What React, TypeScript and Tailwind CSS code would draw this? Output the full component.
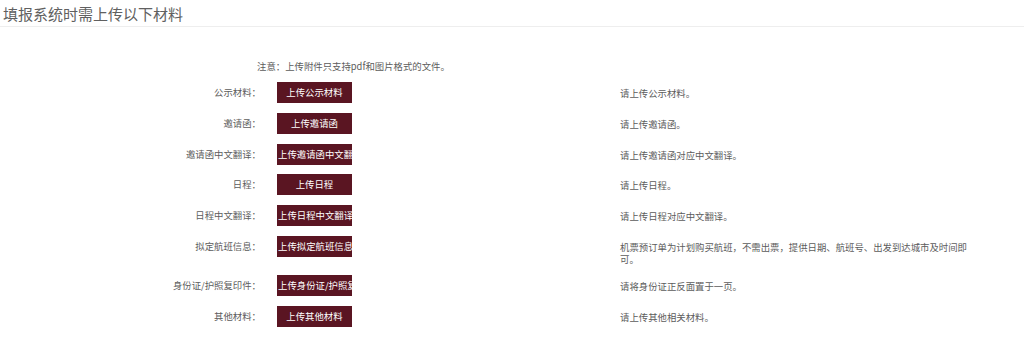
const rows = [
    { label: "公示材料：", button: "上传公示材料", desc: "请上传公示材料。" },
    { label: "邀请函：", button: "上传邀请函", desc: "请上传邀请函。" },
    { label: "邀请函中文翻译：", button: "上传邀请函中文翻译", desc: "请上传邀请函对应中文翻译。" },
    { label: "日程：", button: "上传日程", desc: "请上传日程。" },
    { label: "日程中文翻译：", button: "上传日程中文翻译", desc: "请上传日程对应中文翻译。" },
    { label: "拟定航班信息：", button: "上传拟定航班信息", desc: "机票预订单为计划购买航班，不需出票，提供日期、航班号、出发到达城市及时间即可。" },
    { label: "身份证/护照复印件：", button: "上传身份证/护照复印件", desc: "请将身份证正反面置于一页。" },
    { label: "其他材料：", button: "上传其他材料", desc: "请上传其他相关材料。" },
];

export default function App() {
    return (
        <div className="h-[338px] w-[1024px] overflow-hidden bg-white text-[#5c5c5c] [font-family:'Noto_Sans_CJK_SC','Noto_Sans',sans-serif]">
            {/* Title */}
            <div className="h-[27px] border-b border-[#eeeeee] pl-[3px] pt-[4px] text-[15px] leading-[20px] text-[#606060]">
                填报系统时需上传以下材料
            </div>

            {/* Notice */}
            <div className="pl-[257px] pt-[33px] text-[9.4px] leading-[12px]">
                注意：上传附件只支持pdf和图片格式的文件。
            </div>

            {/* Upload rows */}
            <div className="pt-[10px]">
                {rows.map((row) => (
                    <div key={row.label} className="mb-[9.8px] flex items-start">
                        <div className="w-[261px] whitespace-nowrap text-right text-[9.4px] leading-[21px]">
                            {row.label}
                        </div>
                        <button className="ml-[16px] h-[21px] w-[75px] overflow-hidden whitespace-nowrap bg-[#5a1522] px-[1px] text-center text-[9.4px] leading-[21px] text-white">
                            {row.button}
                        </button>
                        <div className="ml-[268px] w-[352px] pt-[5px] text-[9.4px] leading-[12px]">
                            {row.desc}
                        </div>
                    </div>
                ))}
            </div>
        </div>
    );
}
